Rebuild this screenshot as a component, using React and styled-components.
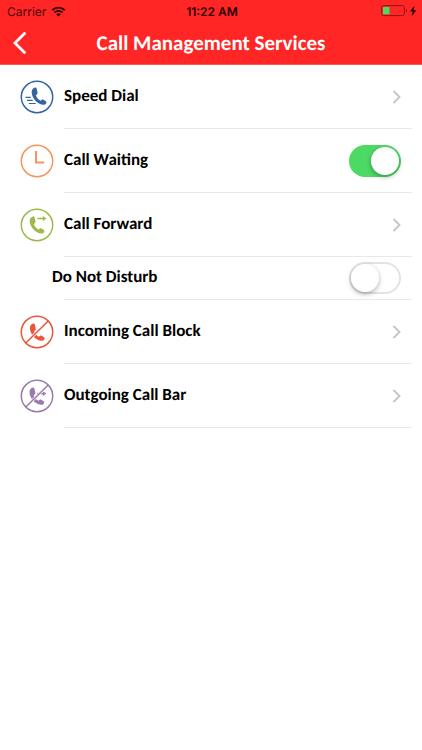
import { useState } from 'react';
import styled, { createGlobalStyle } from 'styled-components';

const GlobalStyle = createGlobalStyle`
  * {
    box-sizing: border-box;
  }
  body {
    margin: 0;
    background: #fff;
    color: #000;
    font-family: Carlito, Lato, sans-serif;
    text-rendering: geometricPrecision;
  }
`;

const Header = styled.header`
  background: #ff2625;
  border-bottom: 1px solid #fb5a58;
`;

const StatusBar = styled.div`
  display: grid;
  grid-template-columns: 1fr auto 1fr;
  align-items: center;
  height: 22px;
  padding: 0 5px 0 7px;
  color: #4a0808;
  font-family: Inter, sans-serif;
  font-size: 12px;
`;

const StatusGroup = styled.div`
  display: flex;
  align-items: center;
  gap: 5px;
  justify-content: ${({ $end }) => ($end ? 'flex-end' : 'flex-start')};
`;

const Time = styled.span`
  color: #2b0404;
  font-weight: 600;
`;

const NavBar = styled.div`
  display: grid;
  grid-template-columns: 40px 1fr 40px;
  align-items: center;
  height: 42px;
`;

const BackButton = styled.button`
  display: flex;
  padding: 0 0 0 12px;
  border: 0;
  background: none;
  color: #fff;
  cursor: pointer;
`;

const Title = styled.h1`
  margin: 0;
  color: #fff;
  font-size: 21px;
  line-height: 24px;
  font-weight: 700;
  text-align: center;
  white-space: nowrap;
`;

const List = styled.ul`
  margin: 0;
  padding: 0;
  list-style: none;
`;

const Item = styled.li`
  display: flex;
  padding: 0 10px 0 20px;
`;

const IconCell = styled.span`
  display: flex;
  align-items: center;
  flex: none;
  width: 44px;
`;

const rowLayout = `
  display: flex;
  flex: 1;
  align-items: center;
  justify-content: space-between;
  padding: 0 11px 0 0;
  border: 0;
  border-bottom: 1px solid #e8e8ea;
  color: inherit;
  background: none;
  font: 700 17px/22px Carlito, Lato, sans-serif;
  text-align: left;
`;

const LinkRow = styled.a`
  ${rowLayout}
  height: 64px;
  text-decoration: none;
`;

const SwitchRow = styled.label`
  ${rowLayout}
  height: ${({ $compact }) => ($compact ? '43px' : '64px')};
`;

const Label = styled.span`
  padding-bottom: 2px;
  margin-left: ${({ $outdent }) => ($outdent ? '-12px' : '0')};
`;

const Switch = styled.input`
  appearance: none;
  flex: none;
  display: flex;
  align-items: center;
  width: 52px;
  height: 32px;
  margin: 0;
  padding: 0 2px;
  border-radius: 16px;
  background: #fff;
  box-shadow: inset 0 0 0 2px #e3e3e3;
  cursor: pointer;

  &::before {
    content: '';
    width: 28px;
    height: 28px;
    border-radius: 50%;
    background: #fff;
    box-shadow: 0 2px 5px rgba(0, 0, 0, 0.3);
  }

  &:checked {
    justify-content: flex-end;
    background: #4cd964;
    box-shadow: none;
  }
`;

const HANDSET =
  'M14.8 7.6c-2 .6-3.2 2.3-3.1 4.6.2 5.8 5.3 11.7 11.1 12.5 1.9.2 3.3-.6 3.6-2 .1-.6-.1-1-.6-1.4l-2.2-1.5c-.7-.4-1.4-.4-2 .1l-1 .9c-2.3-1.2-4-3.2-4.7-5.6l1.2-1c.5-.5.6-1.1.4-1.8l-.9-3.9c-.2-.8-.9-1.1-1.8-.9z';

function Ring({ color, children }) {
  return (
    <svg width="34" height="34" viewBox="0 0 34 34" fill="none" stroke={color} aria-hidden="true">
      <circle cx="17" cy="17" r="15.7" strokeWidth="1.5" />
      {children}
    </svg>
  );
}

function SpeedDialIcon() {
  return (
    <Ring color="#3465a0">
      <path d={HANDSET} fill="#3465a0" stroke="none" />
      <path d="M5.5 17.3h5.3M7 20.4h5.8M8.700 23.5h7" strokeWidth="1.2" />
    </Ring>
  );
}

function WaitingIcon() {
  return (
    <Ring color="#f2955f">
      <path d="M16 7v11.5h8.2" strokeWidth="2" />
    </Ring>
  );
}

function ForwardIcon() {
  return (
    <Ring color="#9dbb4a">
      <path d={HANDSET} fill="#9dbb4a" stroke="none" transform="translate(-2 .8)" />
      <path d="M17.5 10.5h6.5" strokeWidth="1.5" />
      <path d="M22.8 8.1l3.6 2.4-3.6 2.4z" fill="#9dbb4a" stroke="none" />
    </Ring>
  );
}

function BlockIcon() {
  return (
    <Ring color="#ea553b">
      <path d={HANDSET} fill="#ea553b" stroke="none" transform="translate(-1.8 1)" />
      <path d="M8 25.8l18-17.6" stroke="#fff" strokeWidth="3" />
      <path d="M5.8 28l22.4-22" strokeWidth="1.5" />
    </Ring>
  );
}

function BarIcon() {
  return (
    <Ring color="#9a7bac">
      <path d={HANDSET} fill="#9a7bac" stroke="none" transform="translate(-2.2 1)" />
      <path d="M17 14.6h6.5" strokeWidth="1.5" />
      <path d="M22.8 12.2l3.6 2.4-3.6 2.4z" fill="#9a7bac" stroke="none" />
      <path d="M8 25.8l18-17.6" stroke="#fff" strokeWidth="2.6" />
      <path d="M5.8 28l22.4-22" strokeWidth="1.5" />
    </Ring>
  );
}

function Chevron() {
  return (
    <svg width="9" height="14" viewBox="0 0 9 14" fill="none" aria-hidden="true">
      <path d="M1.5 1l6 6-6 6" stroke="#c4c4c9" strokeWidth="1.8" />
    </svg>
  );
}

function WifiIcon() {
  return (
    <svg width="15" height="11" viewBox="0 0 14 11" fill="none" stroke="#240202" aria-hidden="true">
      <path d="M.8 4.2a9 9 0 0 1 12.4 0M3 6.5a5.8 5.8 0 0 1 8 0" strokeWidth="1.8" />
      <path d="M7 10.5L4.7 8.3a3.3 3.3 0 0 1 4.6 0z" fill="#240202" stroke="none" />
    </svg>
  );
}

function BatteryIcon() {
  return (
    <svg width="36" height="12" viewBox="0 0 36 12" aria-hidden="true">
      <rect x=".6" y=".6" width="22.8" height="10" rx="2" fill="none" stroke="#8f1514" />
      <rect x="2" y="2" width="6.5" height="7.2" rx=".5" fill="#4cd964" />
      <path d="M25 4c1.5.4 1.5 2.8 0 3.2z" fill="#8f1514" />
      <path d="M33.5.8l-4.5 5.7h2.7l-1 4.7 4.6-6h-2.8z" fill="#240202" />
    </svg>
  );
}

function LinkItem({ icon, label }) {
  return (
    <Item>
      <IconCell>{icon}</IconCell>
      <LinkRow href="#">
        <Label>{label}</Label>
        <Chevron />
      </LinkRow>
    </Item>
  );
}

function SwitchItem({ icon, label, compact, initial = false }) {
  const [on, setOn] = useState(initial);
  return (
    <Item>
      <IconCell>{icon}</IconCell>
      <SwitchRow $compact={compact}>
        <Label $outdent={compact}>{label}</Label>
        <Switch type="checkbox" role="switch" checked={on} onChange={() => setOn(!on)} />
      </SwitchRow>
    </Item>
  );
}

function App() {
  return (
    <>
      <GlobalStyle />
      <Header>
        <StatusBar>
          <StatusGroup>
            <span>Carrier</span>
            <WifiIcon />
          </StatusGroup>
          <Time>11:22 AM</Time>
          <StatusGroup $end>
            <BatteryIcon />
          </StatusGroup>
        </StatusBar>
        <NavBar>
          <BackButton type="button" aria-label="Back">
            <svg width="15" height="22" viewBox="0 0 15 22" fill="none" aria-hidden="true">
              <path d="M12.5 1.5L3 11l9.5 9.5" stroke="currentColor" strokeWidth="2.8" strokeLinecap="round" />
            </svg>
          </BackButton>
          <Title>Call Management Services</Title>
        </NavBar>
      </Header>
      <main>
        <List>
          <LinkItem icon={<SpeedDialIcon />} label="Speed Dial" />
          <SwitchItem icon={<WaitingIcon />} label="Call Waiting" initial />
          <LinkItem icon={<ForwardIcon />} label="Call Forward" />
          <SwitchItem label="Do Not Disturb" compact />
          <LinkItem icon={<BlockIcon />} label="Incoming Call Block" />
          <LinkItem icon={<BarIcon />} label="Outgoing Call Bar" />
        </List>
      </main>
    </>
  );
}

export default App;
